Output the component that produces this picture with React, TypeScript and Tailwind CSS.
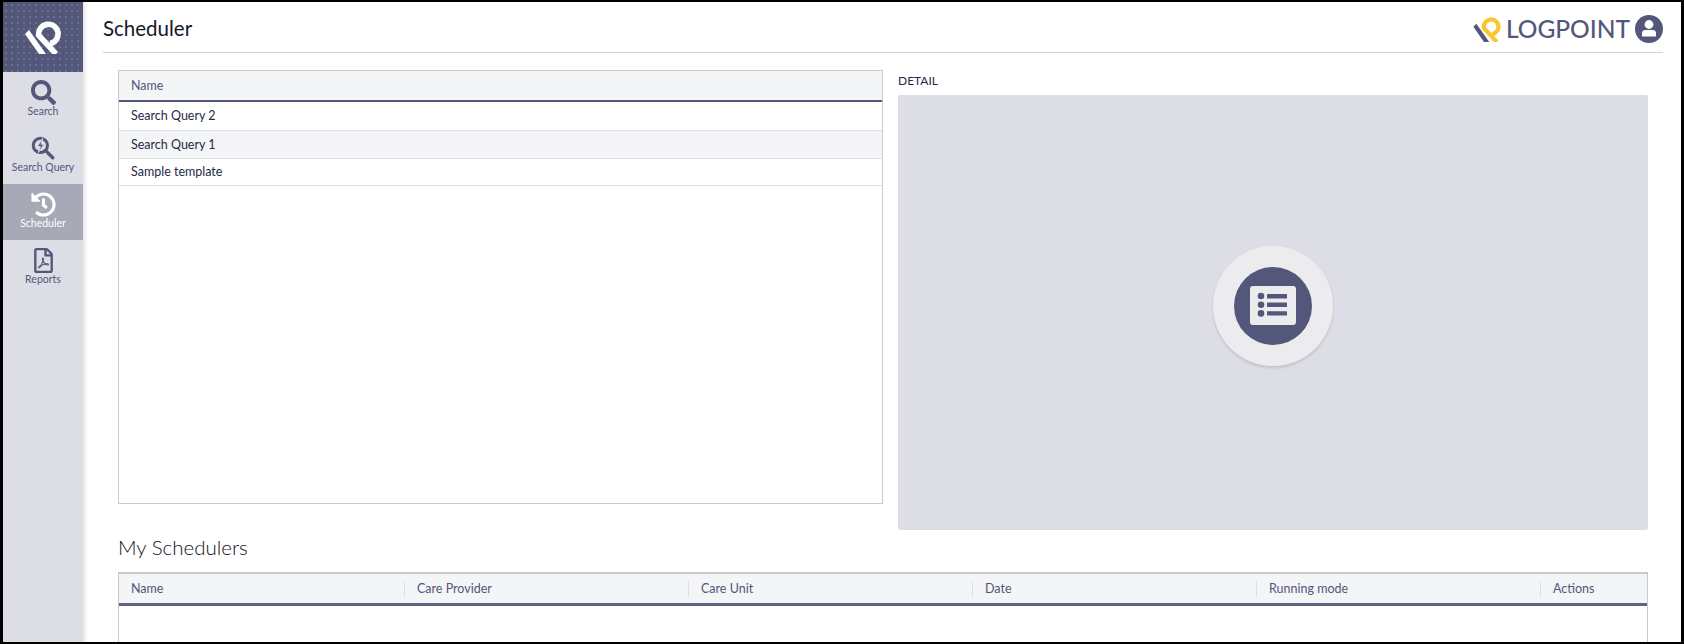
import React from 'react';
import { FaSearch, FaHistory, FaRegFilePdf } from 'react-icons/fa';

const LogoMark = ({ slash, loop, className }: { slash: string; loop: string; className?: string }) => (
  <svg viewBox="0 0 36 33" className={className} fill="none">
    <path d="M0 13 L4 9 L21 33 L14 33 Z" fill={slash} />
    <path d="M31 33 L13.8 14.5 A 9.7 9.7 0 1 1 25 22.5" stroke={loop} strokeWidth="5.6" />
  </svg>
);

const SearchQueryIcon = () => (
  <svg viewBox="0 0 32 32" className="w-[24px] h-[24px]" fill="none">
    <circle cx="12.5" cy="12.5" r="9.5" stroke="#53577a" strokeWidth="4" />
    <path d="M19.5 19.5 L29 29" stroke="#53577a" strokeWidth="4.4" strokeLinecap="round" />
    <path d="M15.5 3 L8.5 14 H12.5 L10 22 L17.5 11 H13.5 Z" fill="#53577a" stroke="#dcdde5" strokeWidth="1.2" />
  </svg>
);

const UserIcon = () => (
  <svg viewBox="0 0 28 28" className="w-[28px] h-[28px] ml-[5px]">
    <circle cx="14" cy="14" r="14" fill="#53577a" />
    <circle cx="14" cy="9.5" r="4.4" fill="#ffffff" />
    <path d="M7 21.5 V18 C7 16 8.5 15 10 15 H18 C19.5 15 21 16 21 18 V21.5 Z" fill="#ffffff" />
  </svg>
);

const ListIcon = () => (
  <svg viewBox="0 0 46 39" className="w-[46px] h-[39px]">
    <rect width="46" height="39" rx="3" fill="#ececee" />
    <circle cx="11" cy="10" r="3.3" fill="#53577a" />
    <circle cx="11" cy="18.7" r="3.3" fill="#53577a" />
    <circle cx="11" cy="27.4" r="3.3" fill="#53577a" />
    <rect x="17" y="8" width="20" height="4.4" rx="0.5" fill="#53577a" />
    <rect x="17" y="16.6" width="20" height="4.4" rx="0.5" fill="#53577a" />
    <rect x="17" y="25.2" width="20" height="4.4" rx="0.5" fill="#53577a" />
  </svg>
);

const navItems = [
  { label: 'Search', icon: <FaSearch size={25} color="#53577a" /> },
  { label: 'Search Query', icon: <SearchQueryIcon /> },
  { label: 'Scheduler', icon: <FaHistory size={25} color="#ffffff" />, active: true },
  { label: 'Reports', icon: <FaRegFilePdf size={25} color="#53577a" /> },
];

const queries = ['Search Query 2', 'Search Query 1', 'Sample template'];
const columns = ['Name', 'Care Provider', 'Care Unit', 'Date', 'Running mode', 'Actions'];

const App = () => {
  return (
    <div className="w-[1684px] h-[644px] bg-black pt-[2px] pb-[2px] pl-[3px] pr-[3px] overflow-hidden font-['Lato','Noto_Sans',sans-serif]">
      <div className="flex h-full bg-white overflow-hidden">
        {/* Sidebar */}
        <aside className="w-[80px] shrink-0 bg-[#dcdde5] shadow-[2px_0_4px_rgba(0,0,0,0.12)]">
          <div className="h-[70px] bg-[#53577a] bg-[radial-gradient(#6a6e90_1px,transparent_1px)] bg-[length:6px_6px] flex items-center justify-center">
            <LogoMark slash="#ffffff" loop="#ffffff" className="w-[36px] h-[33px]" />
          </div>
          {navItems.map((item) => (
            <div
              key={item.label}
              className={`h-[56px] flex flex-col items-center pt-[7px] ${item.active ? 'bg-[#a7a9b7] text-white' : 'text-[#53577a]'}`}
            >
              <div className="h-[26px] flex items-center">{item.icon}</div>
              <span className="text-[10.5px] leading-[14px] -mt-[1px]">{item.label}</span>
            </div>
          ))}
        </aside>

        <main className="flex-1 min-w-0">
          {/* Header */}
          <header className="ml-[20px] mr-[18px] h-[51px] border-b border-[#cfd0da] flex items-center justify-between">
            <h1 className="text-[20.5px] text-[#15172a] pt-[3px]">Scheduler</h1>
            <div className="flex items-center pt-[4px]">
              <LogoMark slash="#53577a" loop="#f8c62f" className="w-[28px] h-[25px]" />
              <span className="text-[24.5px] font-medium leading-none text-[#53577a] ml-[5px]">LOGPOINT</span>
              <UserIcon />
            </div>
          </header>

          <div className="pl-[35px] pr-[33px]">
            <div className="flex gap-[15px] mt-[17px]">
              {/* Query list */}
              <section className="w-[765px] h-[434px] border border-[#c8c9d0]">
                <div className="h-[31px] bg-[#f4f5f7] border-b-2 border-[#53577a] flex items-center pt-[1px] px-[12px] text-[12.5px] text-[#53577a]">
                  Name
                </div>
                {queries.map((q, i) => (
                  <div
                    key={q}
                    className={`${i === 0 ? 'h-[29px]' : i === 1 ? 'h-[28px] pt-[1px] bg-[#f4f5f7]' : 'h-[27px]'} border-b border-[#dcdde5] flex items-center px-[12px] text-[12.5px] text-[#262a45]`}
                  >
                    {q}
                  </div>
                ))}
              </section>

              {/* Detail */}
              <section className="flex-1">
                <div className="text-[12px] leading-[14px] mt-[4px] mb-[7px] text-[#262a45]">DETAIL</div>
                <div className="h-[435px] pb-[14px] bg-[#dcdde5] rounded-[2px] flex items-center justify-center">
                  <div className="w-[120px] h-[120px] rounded-full bg-[#ececee] shadow-[0_2px_3px_rgba(0,0,0,0.12)] flex items-center justify-center">
                    <div className="w-[78px] h-[78px] rounded-full bg-[#53577a] flex items-center justify-center">
                      <ListIcon />
                    </div>
                  </div>
                </div>
              </section>
            </div>

            {/* My Schedulers */}
            <h2 className="text-[20.5px] font-light leading-[26px] text-[#0d0f20] mt-[4px] mb-[12px]">My Schedulers</h2>
            <section className="border border-[#c8c9d0] border-t-2 h-[120px]">
              <div className="h-[32px] bg-[#f4f5f7] border-b-[3px] border-[#5f6385] grid grid-cols-[285px_284px_284px_284px_284px_1fr] items-center text-[12.5px] text-[#53577a]">
                {columns.map((c, i) => (
                  <div key={c} className={`px-[12px] h-[16px] leading-[16px] ${i > 0 ? 'border-l border-[#dcdde5]' : ''}`}>
                    {c}
                  </div>
                ))}
              </div>
            </section>
          </div>
        </main>
      </div>
    </div>
  );
};

export default App;
